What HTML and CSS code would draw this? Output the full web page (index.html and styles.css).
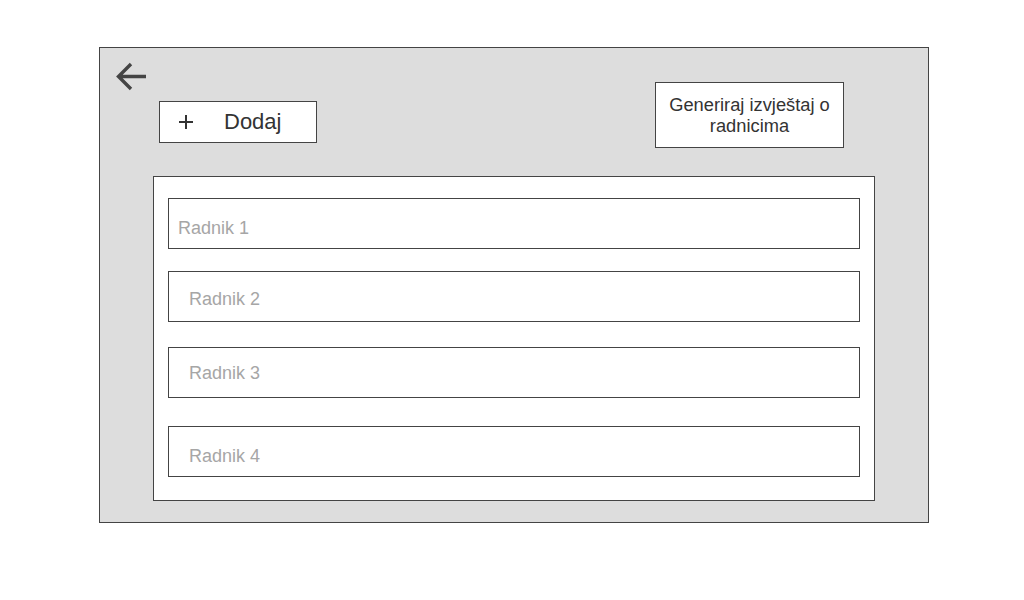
FILE: index.html
```html
<!DOCTYPE html>
<html>
<head>
<meta charset="utf-8">
<link rel="stylesheet" href="styles.css">
</head>
<body>
<div class="frame">
  <div class="header">
    <svg class="back" width="31" height="29" viewBox="0 0 31 29">
      <path d="M30 14.5 H3 M15 2 L2.5 14.5 L15 27" fill="none" stroke="#444" stroke-width="3.4"/>
    </svg>
    <div class="btn-add">
      <svg class="plus" width="16" height="16" viewBox="0 0 16 16">
        <path d="M8 1 V15 M1 8 H15" stroke="#333" stroke-width="2" fill="none"/>
      </svg>
      <span class="add-label">Dodaj</span>
    </div>
    <div class="btn-report">Generiraj izvještaj o<br>radnicima</div>
  </div>
  <div class="list">
    <div class="row r1">Radnik 1</div>
    <div class="row r2">Radnik 2</div>
    <div class="row r3">Radnik 3</div>
    <div class="row r4">Radnik 4</div>
  </div>
</div>
</body>
</html>
```
FILE: styles.css
```css
html, body {
  margin: 0;
  padding: 0;
  background: #fff;
}
body {
  width: 1024px;
  height: 600px;
  font-family: "Liberation Sans", Arial, sans-serif;
  padding-top: 47px;
  padding-left: 99px;
  box-sizing: border-box;
}
.frame {
  box-sizing: border-box;
  width: 830px;
  height: 476px;
  border: 1px solid #444;
  background: #dddddd;
}
.header {
  display: flex;
  align-items: flex-start;
  height: 128px;
}
.back {
  display: block;
  margin-left: 16px;
  margin-top: 14px;
}
.btn-add {
  box-sizing: border-box;
  width: 158px;
  height: 42px;
  margin-left: 12px;
  margin-top: 53px;
  border: 1px solid #444;
  background: #fff;
  display: flex;
  align-items: center;
}
.plus {
  display: block;
  margin-left: 18px;
}
.add-label {
  margin-left: 30px;
  font-size: 22px;
  color: #333;
  line-height: 24px;
}
.btn-report {
  box-sizing: border-box;
  width: 189px;
  height: 66px;
  margin-left: auto;
  margin-right: 84px;
  margin-top: 34px;
  border: 1px solid #444;
  background: #fff;
  display: flex;
  align-items: center;
  justify-content: center;
  text-align: center;
  font-size: 18.3px;
  line-height: 21px;
  color: #333;
}
.list {
  box-sizing: border-box;
  width: 722px;
  height: 325px;
  margin-left: 53px;
  border: 1px solid #444;
  background: #fff;
  padding: 21px 14px 0 14px;
  display: flex;
  flex-direction: column;
}
.row {
  box-sizing: border-box;
  height: 51px;
  border: 1px solid #444;
  font-size: 18px;
  line-height: 20px;
  color: #a6a6a6;
  padding-left: 20px;
}
.r1 { padding-top: 19px; padding-left: 9px; }
.r2 { margin-top: 22px; padding-top: 17px; }
.r3 { margin-top: 25px; padding-top: 15px; }
.r4 { margin-top: 28px; padding-top: 19px; }
```
